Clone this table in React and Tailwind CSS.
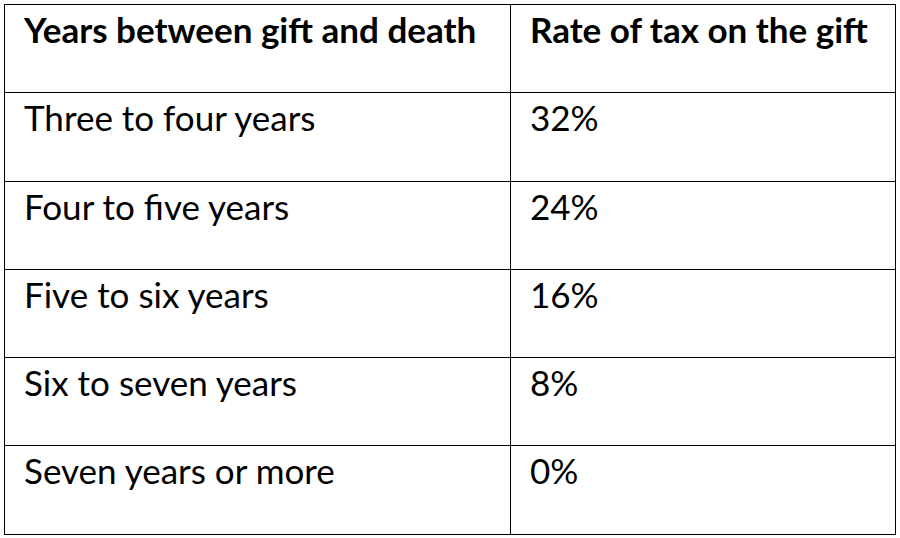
export default function App() {
  const rows = [
    ["Three to four years", "32%", "h-[89px]"],
    ["Four to five years", "24%", "h-[88px]"],
    ["Five to six years", "16%", "h-[88px]"],
    ["Six to seven years", "8%", "h-[88px]"],
    ["Seven years or more", "0%", "h-[89px]"],
  ];
  return (
    <div className="w-[900px] h-[538px] bg-white pt-[4px] pl-[4px] text-black font-['Lato',sans-serif]">
      <div className="w-[892px] border-l border-t border-black">
        <div className="flex h-[88px]">
          <div className="w-[506px] border-r border-b border-black pl-[19px] pt-[7px] text-[35px] font-bold leading-none">
            Years between gift and death
          </div>
          <div className="w-[385px] border-r border-b border-black pl-[19px] pt-[7px] text-[35px] font-bold leading-none">
            Rate of tax on the gift
          </div>
        </div>
        {rows.map(([a, b, h]) => (
          <div key={a} className={`flex ${h}`}>
            <div className="w-[506px] border-r border-b border-black pl-[19px] pt-[7px] text-[35px] leading-none">
              {a}
            </div>
            <div className="w-[385px] border-r border-b border-black pl-[19px] pt-[7px] text-[35px] leading-none">
              {b}
            </div>
          </div>
        ))}
      </div>
    </div>
  );
}
